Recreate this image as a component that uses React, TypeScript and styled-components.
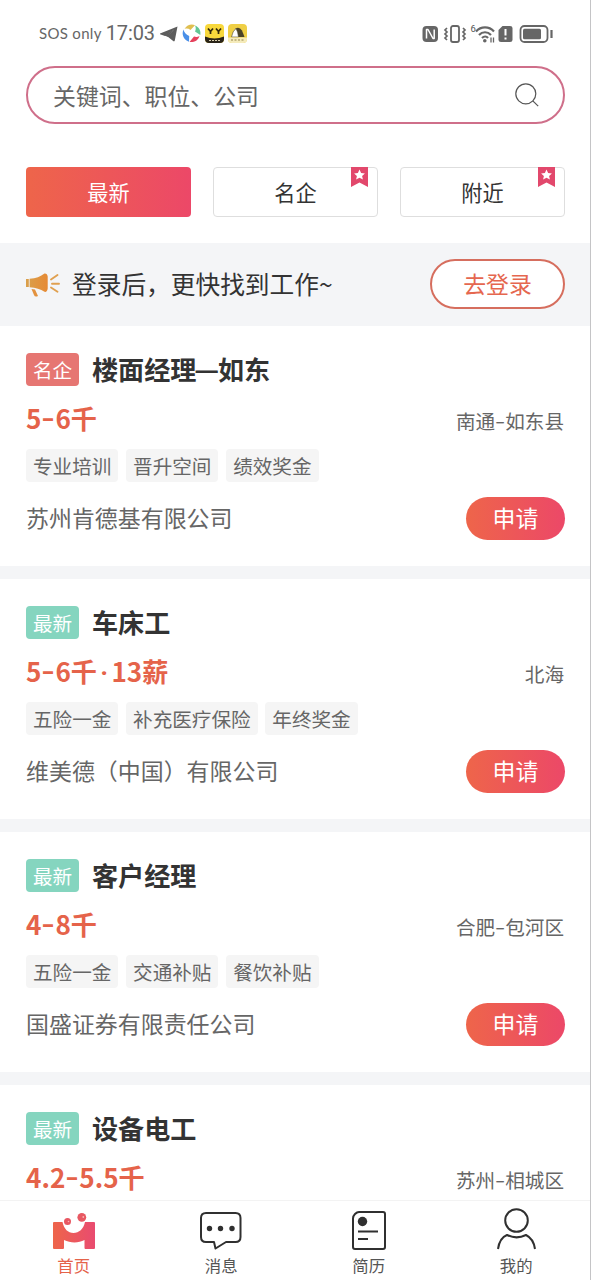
import React from "react";
import styled, { createGlobalStyle } from "styled-components";

const Global = createGlobalStyle`
  * { box-sizing: border-box; }
  html, body { margin: 0; padding: 0; background: #fff; }
  body { font-family: "Noto Sans CJK SC", sans-serif; color: #333; overflow: hidden; }
  button { font-family: inherit; cursor: pointer; padding: 0; border: 0; }
  svg { display: block; flex: none; }
`;

const warm = "linear-gradient(90deg, #ee654a 0%, #ec4868 100%)";

const Screen = styled.div`
  width: 591px;
  height: 1280px;
  display: flex;
  flex-direction: column;
  overflow: hidden;
  background: #fff;
  border-right: 1px solid #c4c4c6;
`;

const StatusBar = styled.header`
  height: 66px;
  flex: none;
  display: flex;
  justify-content: space-between;
  padding: 20px 36px 0 39px;
`;

const StatusGroup = styled.div<{ $gap: number }>`
  height: 27px;
  display: flex;
  align-items: center;
  gap: ${(p) => p.$gap}px;
  color: #666;
`;

const Carrier = styled.span`
  font-family: "Lato", sans-serif;
  font-size: 15px;
  line-height: 27px;
  letter-spacing: 0.3px;
  white-space: nowrap;
`;

const Clock = styled.span`
  font-family: "Roboto", sans-serif;
  font-size: 20px;
  line-height: 27px;
  letter-spacing: -0.1px;
  width: 50px;
`;

const SearchBox = styled.div`
  height: 58px;
  flex: none;
  margin: 0 25px 0 26px;
  padding: 0 24px 0 25px;
  border: 2px solid #cf6f8a;
  border-radius: 29px;
  display: flex;
  align-items: center;
  justify-content: space-between;
  font-size: 22.9px;
  line-height: 54px;
  color: #666;
`;

const Tabs = styled.nav`
  flex: none;
  display: grid;
  grid-template-columns: repeat(3, 1fr);
  column-gap: 22px;
  padding: 43px 25px 26px 26px;
`;

const Tab = styled.button<{ $active?: boolean }>`
  position: relative;
  height: 50px;
  border-radius: 4px;
  border: ${(p) => (p.$active ? "0" : "1px solid #dedede")};
  background: ${(p) => (p.$active ? warm : "#fff")};
  color: ${(p) => (p.$active ? "#fff" : "#333")};
  font-size: 21.2px;
  line-height: 48px;
`;

const Ribbon = styled.svg`
  position: absolute;
  top: -1px;
  right: 9px;
`;

const LoginBanner = styled.section`
  height: 83px;
  flex: none;
  display: flex;
  align-items: center;
  padding: 0 25px 2px 25px;
  background: #f4f5f7;
`;

const BannerText = styled.span`
  flex: 1;
  margin-left: 11px;
  padding-bottom: 2px;
  font-size: 24.7px;
  line-height: 40px;
`;

const LoginButton = styled.button`
  width: 135px;
  height: 50px;
  border: 2px solid #d66e5e;
  border-radius: 25px;
  padding-bottom: 2px;
  background: #fff;
  color: #e5674f;
  font-size: 22.9px;
  line-height: 44px;
`;

const JobList = styled.main`
  flex: 1;
  min-height: 0;
  overflow: hidden;
`;

const Card = styled.article`
  padding: 27px 26px 27px 26px;
  border-bottom: 13px solid #f4f5f7;
`;

const TitleRow = styled.div`
  height: 33px;
  display: flex;
  align-items: center;
`;

const Badge = styled.span<{ $famous?: boolean }>`
  width: 53px;
  height: 33px;
  border-radius: 4px;
  text-align: center;
  background: ${(p) => (p.$famous ? "#e67672" : "#85d5bf")};
  color: #fff;
  font-size: 19.6px;
  line-height: 33px;
`;

const Title = styled.h2`
  margin: 0 0 0 13px;
  font-size: 26.1px;
  line-height: 33px;
  font-weight: 700;
`;

const PayRow = styled.div`
  height: 63px;
  display: flex;
  align-items: center;
  justify-content: space-between;
`;

const Pay = styled.span`
  color: #e5634a;
  font-size: 26.1px;
  line-height: 36px;
  font-weight: 700;
  white-space: nowrap;
`;

const Place = styled.span`
  padding-top: 7px;
  color: #666;
  font-size: 19.6px;
  line-height: 28px;
`;

const Mark = styled.span<{ $w: number; $stretch?: number; $lift?: number; $font?: string }>`
  display: inline-flex;
  justify-content: center;
  width: ${(p) => p.$w}px;
  line-height: 1;
  font-family: ${(p) => p.$font ?? "inherit"};
  transform: translateY(${(p) => -(p.$lift ?? 0)}px) scaleX(${(p) => p.$stretch ?? 1});
`;

const TagRow = styled.div`
  display: flex;
  gap: 7.7px;
`;

const Tag = styled.span`
  height: 33px;
  padding: 0 7px;
  border-radius: 4px;
  background: #f5f5f5;
  color: #666;
  font-size: 19.6px;
  line-height: 33px;
`;

const CompanyRow = styled.div`
  height: 42px;
  margin: 15px -1px 0 0;
  display: flex;
  align-items: center;
  justify-content: space-between;
  color: #666;
  font-size: 22.95px;
  line-height: 40px;
`;

const Company = styled.span`
  padding-bottom: 2px;
`;

const Apply = styled.button`
  width: 99px;
  height: 43px;
  border-radius: 22px;
  padding-bottom: 2px;
  background: ${warm};
  color: #fff;
  font-size: 22.9px;
  line-height: 41px;
`;

const BottomNav = styled.nav`
  height: 80px;
  flex: none;
  display: grid;
  grid-template-columns: repeat(4, 1fr);
  border-top: 1px solid #f3f3f3;
  background: #fff;
`;

const NavItem = styled.a<{ $active?: boolean }>`
  display: flex;
  flex-direction: column;
  align-items: center;
  padding-top: 5px;
  font-size: 16.4px;
  line-height: 24px;
  color: ${(p) => (p.$active ? "#e5634a" : "#555")};
  svg { margin-bottom: 1px; }
`;

type Job = { kind: string; title: string; pay: string; place: string; tags?: string[]; company?: string };

const jobs: Job[] = [
  { kind: "名企", title: "楼面经理—如东", pay: "5-6千", place: "南通-如东县", tags: ["专业培训", "晋升空间", "绩效奖金"], company: "苏州肯德基有限公司" },
  { kind: "最新", title: "车床工", pay: "5-6千·13薪", place: "北海", tags: ["五险一金", "补充医疗保险", "年终奖金"], company: "维美德（中国）有限公司" },
  { kind: "最新", title: "客户经理", pay: "4-8千", place: "合肥-包河区", tags: ["五险一金", "交通补贴", "餐饮补贴"], company: "国盛证券有限责任公司" },
  { kind: "最新", title: "设备电工", pay: "4.2-5.5千", place: "苏州-相城区" },
];

type MarkSize = { w: number; stretch?: number; lift?: number; font?: string };

/* Gives dashes and middle dots their own advance width. */
function Spaced({ text, sizes }: { text: string; sizes: Record<string, MarkSize> }) {
  return (
    <>
      {text.split(/([-·—])/).map((part, i) => {
        const size = sizes[part];
        return size ? (
          <Mark key={i} $w={size.w} $stretch={size.stretch} $lift={size.lift} $font={size.font}>{part}</Mark>
        ) : (
          <React.Fragment key={i}>{part}</React.Fragment>
        );
      })}
    </>
  );
}

const titleMarks = { "—": { w: 21.5, stretch: 1.05, lift: 1 } };
const payMarks = { "-": { w: 14, stretch: 1.4, lift: 2 }, "·": { w: 14.5, font: "Roboto, sans-serif" } };
const placeMarks = { "-": { w: 10, stretch: 1.5, lift: 1.5 } };

const StarRibbon = () => (
  <Ribbon width="17" height="20" viewBox="0 0 17 20">
    <path d="M0 0h17v20l-8.500-4.500L0 20z" fill="#e2486c" />
    <path d="M8.500 2.500l1.600 3.500 3.800.4-2.800 2.500.8 3.700-3.400-1.900-3.400 1.900.8-3.700-2.800-2.500 3.800-.4z" fill="#fff" />
  </Ribbon>
);

const Plane = () => (
  <svg width="18" height="16" viewBox="0 0 18 16">
    <path d="M17.500.5L0 7.500q-.5.500 0 .8l5 1.700L14 3.500 7.500 10.500l6 4.800c.7.300 1.100 0 1.300-.7z" fill="#5d5d5d" />
    <path d="M4.500 9.500L14.500 3 8 11z" fill="#5d5d5d" />
  </svg>
);

const Pinwheel = () => (
  <svg width="19" height="19" viewBox="0 0 19 19">
    <path d="M2.500 5C5 .5 10-.2 13 1.300L8.500 6C6.500 4.500 4.500 4.200 2.500 5z" fill="#e0bf50" />
    <path d="M13 1.500c4.500 1.800 6 5.500 5.300 9.500L13 7.500c1-2 1-4 0-6z" fill="#62c694" />
    <path d="M17.500 12c-1.500 5-5.500 6.500-10 6l4.500-5.500c2 .7 3.700.5 5.500-.5z" fill="#e5415c" />
    <path d="M1.500 5.500C-.5 10 1 15.500 7 17.800l.2-5.800C4 10.500 2 8.500 1.500 5.500z" fill="#4a90e8" />
  </svg>
);

const YellowFace = () => (
  <svg width="19" height="19" viewBox="0 0 19 19">
    <rect width="19" height="19" rx="4" fill="#f8d83c" />
    <path d="M0 12.500q9.500 4 19 0V15q0 4-4 4H4q-4 0-4-4z" fill="#2a2418" />
    <path d="M3 4.500l2.500 3L8 4.500M5.500 7.500v2.500M11 4.500l2.500 3L16 4.500M13.500 7.500v2.500" stroke="#33290c" strokeWidth="1.700" fill="none" />
    <path d="M4 16.500h11" stroke="#d9cfae" strokeWidth="1" strokeDasharray="2 1" />
  </svg>
);

const YellowPeak = () => (
  <svg width="19" height="19" viewBox="0 0 19 19">
    <rect width="19" height="19" rx="4" fill="#efcf45" />
    <path d="M7 5q4-3 7 1.500l2.500 6.500H10z" fill="#4a4328" />
    <path d="M3.500 13q1-6 4.500-8.500 2 3 2.500 8.500z" fill="#fff" stroke="#4a4328" strokeWidth=".6" />
    <path d="M0 13.500h19V15q0 4-4 4H4q-4 0-4-4z" fill="#f5ebbb" />
    <path d="M3 16h13" stroke="#94834a" strokeWidth="1" strokeDasharray="2 1.500" />
  </svg>
);

const StatusIcons = () => (
  <svg width="132" height="22" viewBox="0 0 132 22" fill="none">
    <rect x="0.500" y="3" width="15.500" height="16" rx="4" fill="#666" />
    <path d="M4.500 15.500V6.500H6l5 9h1.200V6.500" stroke="#fff" strokeWidth="1.500" strokeLinejoin="round" />
    <rect x="29" y="3" width="8" height="16" rx="2" stroke="#666" strokeWidth="1.800" />
    <path d="M25 5l-2 2 2 2-2 2 2 2-2 2 2 2M41 5l2 2-2 2 2 2-2 2 2 2-2 2" stroke="#666" strokeWidth="1.700" />
    <text x="48.500" y="9" fill="#555" fontSize="9.500" fontFamily="Roboto, sans-serif">6</text>
    <path d="M54 8.500c5-5.500 13-5.500 18 0M57 12c3.500-3.700 8.500-3.700 12 0M60 15c2-2 4.500-2 6 0" stroke="#666" strokeWidth="2.200" />
    <circle cx="62.800" cy="17.700" r="1.800" fill="#666" />
    <path d="M69 14.500v5M71.500 14.500v5" stroke="#666" strokeWidth="1.300" />
    <path d="M80.500 3h7.500q2.500 0 2.500 2v12q0 2-2.500 2h-9q-2.500 0-2.500-2V7z" fill="#666" />
    <path d="M83.500 6v6.500M83.500 14.500v2" stroke="#fff" strokeWidth="2" />
    <rect x="98.500" y="3" width="27" height="16" rx="4" stroke="#666" strokeWidth="1.800" />
    <rect x="101" y="5.700" width="18" height="10.600" rx="1.500" fill="#666" />
    <path d="M129.500 7v8" stroke="#666" strokeWidth="2.200" />
  </svg>
);

const Magnifier = () => (
  <svg width="24" height="24" viewBox="0 0 24 24" fill="none" stroke="#555" strokeWidth="1.200">
    <circle cx="10.800" cy="10.800" r="10" />
    <path d="M17.800 17.800l5.400 5.400" />
  </svg>
);

const Megaphone = () => (
  <svg width="36" height="28" viewBox="0 0 36 28">
    <defs>
      <linearGradient id="horn" x1="0" x2="1">
        <stop offset="0" stopColor="#d9a04c" />
        <stop offset="1" stopColor="#e68a35" />
      </linearGradient>
    </defs>
    <path d="M1 9h2.800v8H1zM4.600 8.700C11 8.500 15.500 6.500 19.500 3.500c1.700-.3 2.900 1 3.200 3v12c-.3 2.500-1.500 3.700-3.200 3.300-4-2.500-8.500-4.300-14.900-4.500z" fill="url(#horn)" />
    <path d="M6.500 19l3.500.6 3 6.400q-3 1.500-4-1z" fill="#e3923f" />
    <path d="M26 9.500l6.500-4.500M27 13.700h7M26 17.500l6.500 4.200" stroke="#e0a050" strokeWidth="1.900" strokeLinecap="round" />
  </svg>
);

const HomeIcon = () => (
  <svg width="44" height="46" viewBox="0 0 44 46">
    <defs>
      <linearGradient id="home" x1="0" x2="1">
        <stop offset="0" stopColor="#ee654a" />
        <stop offset="1" stopColor="#e94b70" />
      </linearGradient>
    </defs>
    <path d="M2 16h8.500c1.500 7 5.500 11 11 11s10-4 11.500-11h9q1 0 1 1v25q0 1-1 1h-8.500q-1 0-1-1v-8c-6 3.300-14 3.300-20.500 0v8q0 1-1 1H2q-1 0-1-1V17q0-1 1-1z" fill="url(#home)" />
    <circle cx="15.500" cy="15.500" r="4.600" fill="#fff" />
    <circle cx="15.500" cy="15.500" r="3.500" fill="#e85862" />
    <circle cx="29.800" cy="11.300" r="4.400" fill="#e85862" />
    <circle cx="16.500" cy="15.500" r=".8" fill="#f7b3b0" />
    <circle cx="31.300" cy="11" r=".9" fill="#f7b3b0" />
  </svg>
);

const MessageIcon = () => (
  <svg width="44" height="46" viewBox="0 0 44 46" fill="none" stroke="#303030" strokeWidth="2" strokeLinejoin="round">
    <path d="M7 7h29.500q5 0 5 5v19q0 5-5 5H27l-10.500 6.500L15 36H7q-5 0-5-5V12q0-5 5-5z" />
    <g fill="#303030" stroke="none"><circle cx="10.500" cy="22.500" r="2.700" /><circle cx="21.500" cy="22.500" r="2.700" /><circle cx="33" cy="22.500" r="2.700" /></g>
  </svg>
);

const ResumeIcon = () => (
  <svg width="44" height="46" viewBox="0 0 44 46" fill="none" stroke="#303030" strokeWidth="2">
    <path d="M12 6h24q2 0 2 2v33q0 2-2 2H8q-2 0-2-2V12.500q0-2.500 2-4.500t4-2z" />
    <circle cx="15.500" cy="15.500" r="4.700" fill="#303030" stroke="none" />
    <path d="M11 25.500h20M11 33h10" />
  </svg>
);

const PersonIcon = () => (
  <svg width="44" height="46" viewBox="0 0 44 46" fill="none" stroke="#303030" strokeWidth="2">
    <circle cx="22.500" cy="14.500" r="11.300" />
    <path d="M4 43c1-7 4-12 9-14 6 3 13 3 19 0 5 2.500 8 7 9 14" strokeLinejoin="round" />
  </svg>
);

export default function App() {
  return (
    <Screen>
      <Global />
      <StatusBar>
        <StatusGroup $gap={4}>
          <Carrier>SOS only</Carrier>
          <Clock>17:03</Clock>
          <Plane />
          <Pinwheel />
          <YellowFace />
          <YellowPeak />
        </StatusGroup>
        <StatusGroup $gap={0}><StatusIcons /></StatusGroup>
      </StatusBar>
      <SearchBox>关键词、职位、公司<Magnifier /></SearchBox>
      <Tabs>
        <Tab $active>最新</Tab>
        <Tab>名企<StarRibbon /></Tab>
        <Tab>附近<StarRibbon /></Tab>
      </Tabs>
      <LoginBanner>
        <Megaphone />
        <BannerText>登录后，更快找到工作~</BannerText>
        <LoginButton>去登录</LoginButton>
      </LoginBanner>
      <JobList>
        {jobs.map((job) => (
          <Card key={job.title}>
            <TitleRow>
              <Badge $famous={job.kind === "名企"}>{job.kind}</Badge>
              <Title><Spaced text={job.title} sizes={titleMarks} /></Title>
            </TitleRow>
            <PayRow>
              <Pay><Spaced text={job.pay} sizes={payMarks} /></Pay>
              <Place><Spaced text={job.place} sizes={placeMarks} /></Place>
            </PayRow>
            {job.tags && <TagRow>{job.tags.map((t) => <Tag key={t}>{t}</Tag>)}</TagRow>}
            {job.company && (
              <CompanyRow>
                <Company>{job.company}</Company>
                <Apply>申请</Apply>
              </CompanyRow>
            )}
          </Card>
        ))}
      </JobList>
      <BottomNav>
        <NavItem $active><HomeIcon />首页</NavItem>
        <NavItem><MessageIcon />消息</NavItem>
        <NavItem><ResumeIcon />简历</NavItem>
        <NavItem><PersonIcon />我的</NavItem>
      </BottomNav>
    </Screen>
  );
}
